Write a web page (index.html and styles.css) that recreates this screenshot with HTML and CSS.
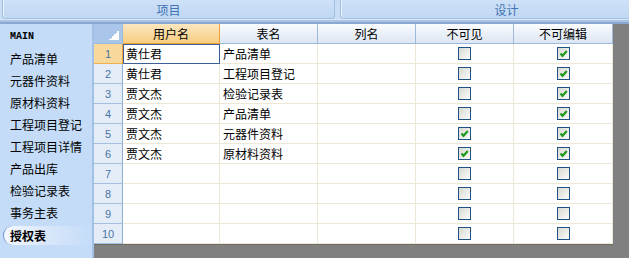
FILE: index.html
```html
<!DOCTYPE html>
<html lang="zh-CN">
<head>
  <meta charset="UTF-8">
  <title>授权表</title>
  <link rel="stylesheet" href="styles.css">
</head>
<body>
  <div class="tabbar">
    <div class="tab">项目</div>
    <div class="tab">设计</div>
  </div>
  <div class="tabline"></div>
  <div class="main">
    <ul class="nav">
      <li class="root">MAIN</li>
      <li>产品清单</li>
      <li>元器件资料</li>
      <li>原材料资料</li>
      <li>工程项目登记</li>
      <li>工程项目详情</li>
      <li>产品出库</li>
      <li>检验记录表</li>
      <li>事务主表</li>
      <li class="current">授权表</li>
    </ul>
    <div class="sheet">
      <table class="grid">
        <colgroup>
          <col class="c-num">
          <col class="c-user">
          <col class="c-col">
          <col class="c-col">
          <col class="c-col">
          <col class="c-last">
        </colgroup>
        <thead>
          <tr>
            <th class="corner"></th>
            <th class="sel">用户名</th>
            <th>表名</th>
            <th>列名</th>
            <th>不可见</th>
            <th>不可编辑</th>
          </tr>
        </thead>
        <tbody id="rows"></tbody>
      </table>
    </div>
  </div>
<script>
  var data = [
    ['黄仕君', '产品清单', '', false, true],
    ['黄仕君', '工程项目登记', '', false, true],
    ['贾文杰', '检验记录表', '', false, true],
    ['贾文杰', '产品清单', '', false, true],
    ['贾文杰', '元器件资料', '', true, true],
    ['贾文杰', '原材料资料', '', true, true],
    ['', '', '', false, false],
    ['', '', '', false, false],
    ['', '', '', false, false],
    ['', '', '', false, false]
  ];
  var tick = '<svg width="11" height="11" viewBox="0 0 11 11"><path d="M2.5 5.5 L4.5 7.8 L8.8 3" fill="none" stroke="#1f9a1f" stroke-width="2.2"/></svg>';

  function box(on) {
    return '<span class="cb">' + (on ? tick : '') + '</span>';
  }

  var html = '';
  for (var i = 0; i < data.length; i++) {
    var r = data[i];
    html += '<tr' + (i === 0 ? ' class="active"' : '') + '>' +
      '<th class="num">' + (i + 1) + '</th>' +
      '<td class="txt">' + r[0] + '</td>' +
      '<td class="txt">' + r[1] + '</td>' +
      '<td class="txt">' + r[2] + '</td>' +
      '<td class="chk">' + box(r[3]) + '</td>' +
      '<td class="chk">' + box(r[4]) + '</td>' +
      '</tr>';
  }
  document.getElementById('rows').innerHTML = html;
</script>
</body>
</html>
```

FILE: styles.css
```css
html, body {
  margin: 0;
  padding: 0;
}
body {
  width: 629px;
  height: 258px;
  overflow: hidden;
  background: #c4dcf8;
  font-family: "Noto Sans CJK SC", "Liberation Sans", sans-serif;
  font-size: 12px;
  color: #000;
}
.tabbar {
  display: flex;
  gap: 5px;
  height: 19px;
  padding-left: 2px;
  overflow: hidden;
  background: #c9def5;
}
.tab {
  flex: 0 0 333px;
  box-sizing: border-box;
  height: 19px;
  border: 1px solid #a3bfe2;
  border-top: none;
  border-radius: 0 0 3px 3px;
  background: linear-gradient(#cde1f7, #c1d8f2);
  box-shadow: inset 1px 0 0 #e9f2fc;
  color: #4071b3;
  text-align: center;
  line-height: 20px;
}
.tabline {
  height: 5px;
  background: linear-gradient(#dae8f8 0, #dae8f8 1px, #a9c4e6 1px, #a9c4e6 3px, #8aa8d0 3px);
}
.main {
  display: flex;
  height: 234px;
}
.nav {
  box-sizing: border-box;
  width: 94px;
  margin: 0;
  padding: 2px 0 0;
  list-style: none;
  background: #c4dcf8;
  border-right: 2px solid #a3c0e6;
}
.nav li {
  height: 22px;
  line-height: 22px;
  padding-left: 10px;
  white-space: nowrap;
}
.nav li.root {
  font-family: "Liberation Mono", "DejaVu Sans Mono", monospace;
  font-size: 10px;
  font-weight: bold;
}
.nav li.current {
  height: 19px;
  line-height: 19px;
  margin: 2px 0 1px 3px;
  padding-left: 6px;
  border-left: 1px solid #6f93c6;
  border-radius: 10px 0 0 10px;
  background: linear-gradient(90deg, #f4f8fe, #dbe8fa 45%, #c4dcf8);
  font-weight: bold;
}
.sheet {
  flex: 1;
  background: #808080;
}
.grid {
  width: 519px;
  table-layout: fixed;
  border-collapse: separate;
  border-spacing: 0;
  background: #fff;
  box-shadow: 0 1px 0 #6f6c62;
}
.c-num { width: 29px; }
.c-user { width: 97px; }
.c-col { width: 98px; }
.c-last { width: 99px; }
.grid tr {
  height: 20px;
}
.grid th,
.grid td {
  box-sizing: border-box;
  padding: 0;
  font-weight: normal;
  white-space: nowrap;
  overflow: hidden;
}
.grid thead th {
  border-right: 1px solid #9dbadb;
  border-bottom: 1px solid #9dbadb;
  background: linear-gradient(#f9fbfe, #dce6f3);
  text-align: center;
  line-height: 19px;
}
.grid thead th.sel {
  border-right-color: #f0a238;
  border-bottom-color: #f0a238;
  background: linear-gradient(#fce7c0, #f7cd82);
}
.grid thead th.corner {
  background: linear-gradient(135deg, transparent 50%, #fff 50%) no-repeat right 3px bottom 3px / 10px 10px, #a9c5ea;
}
.grid th.num {
  border-right: 1px solid #8eaed6;
  border-bottom: 1px solid #a5bfde;
  background: #e4ecf7;
  color: #4a74a8;
  font-family: "Liberation Sans", "DejaVu Sans", sans-serif;
  font-size: 11px;
  text-align: center;
}
.grid tr.active th.num {
  background: #f9d89c;
  border-bottom-color: #f0b050;
  border-right-color: #f0a238;
}
.grid td {
  border-right: 1px solid #ede7d5;
  border-bottom: 1px solid #ede7d5;
}
.grid td.txt {
  padding-left: 3px;
}
.grid tr.active td:first-of-type {
  outline: 1px solid #3b5f96;
  outline-offset: -1px;
}
.grid td.chk {
  text-align: center;
  line-height: 0;
}
.cb {
  display: inline-block;
  width: 11px;
  height: 11px;
  border: 1px solid #1e5184;
  background: linear-gradient(135deg, #d9d9d3, #fbfbf9);
  vertical-align: middle;
}
.cb svg {
  display: block;
}
```
